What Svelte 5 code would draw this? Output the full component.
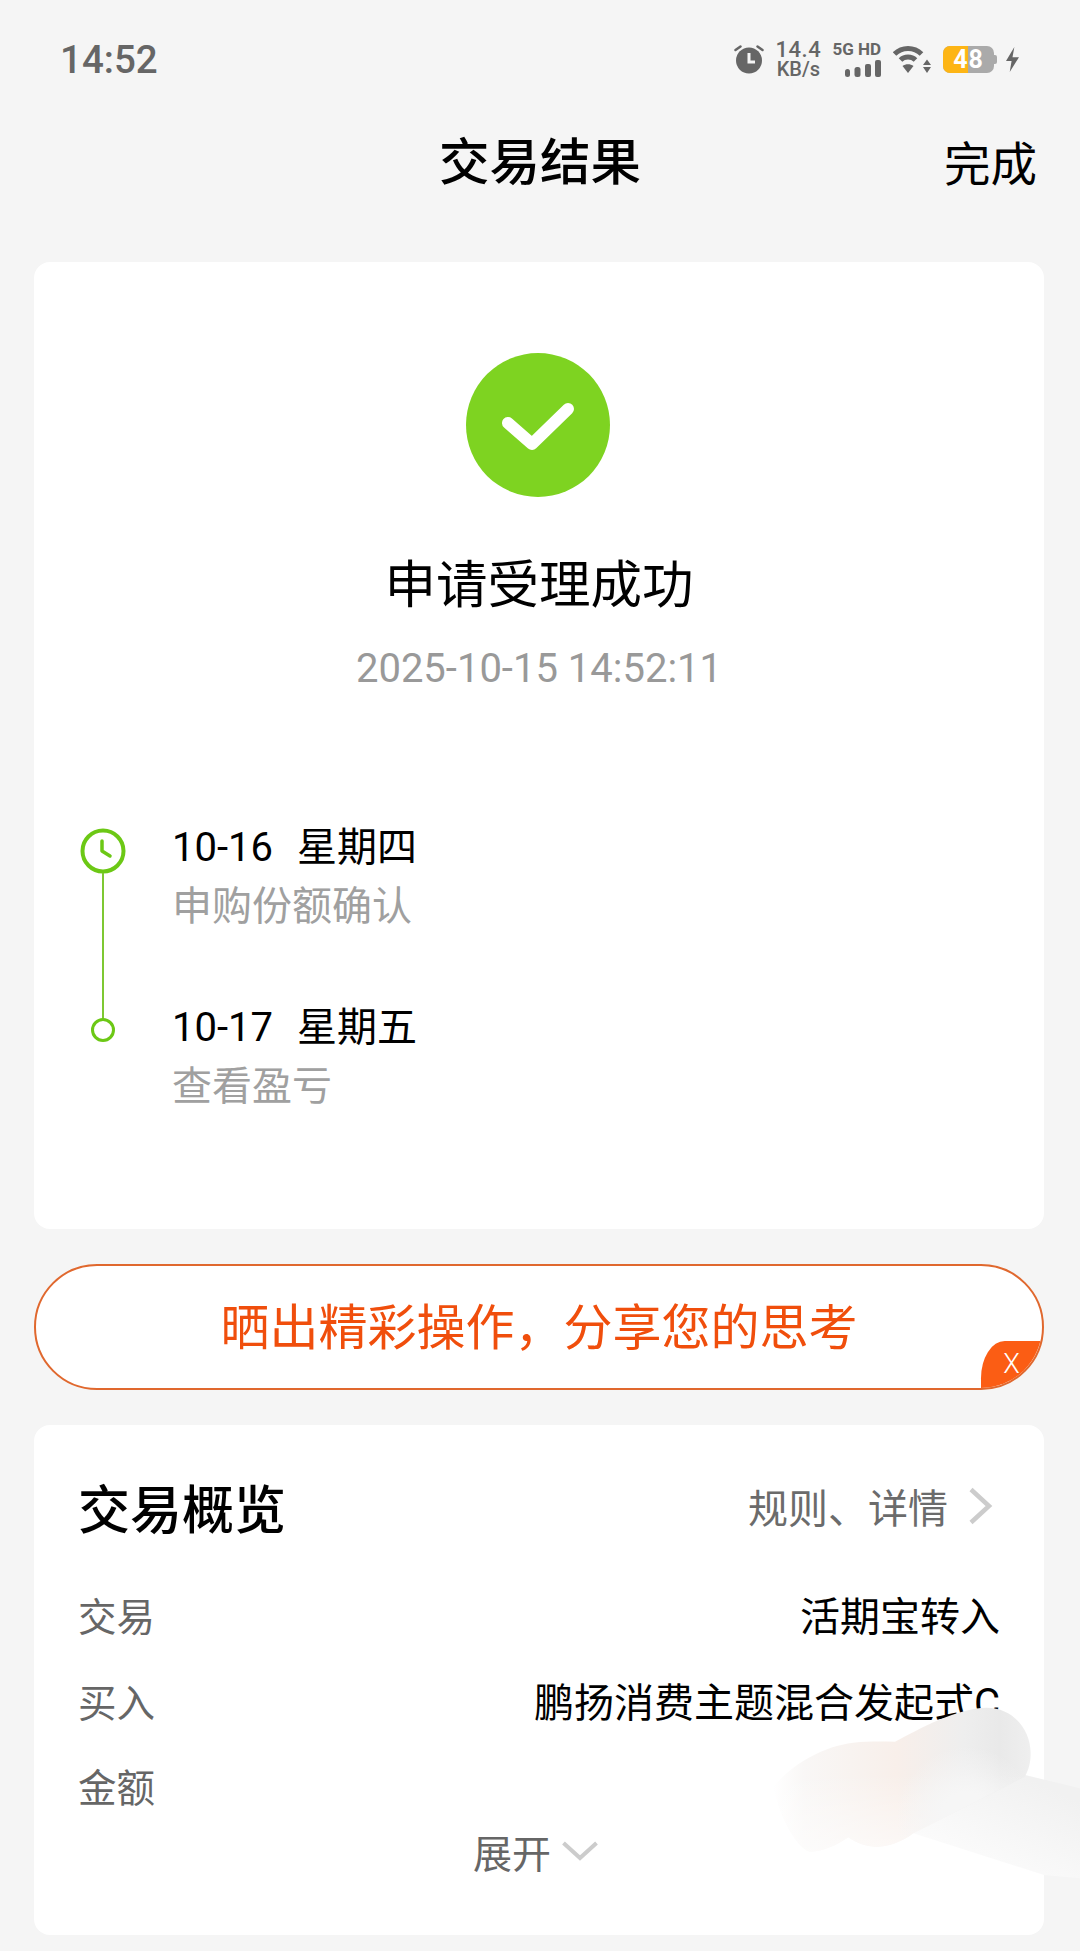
<script>
  const steps = [
    { date: '10-16', day: '星期四', note: '申购份额确认' },
    { date: '10-17', day: '星期五', note: '查看盈亏' }
  ];
  const rows = [
    { label: '交易', value: '活期宝转入' },
    { label: '买入', value: '鹏扬消费主题混合发起式C' },
    { label: '金额', value: '' }
  ];
  const lobe = 'M280 560C330 500 420 440 520 428C570 423 610 425 645 425C720 385 830 325 920 323C1000 323 1052 390 1052 460C1052 490 1045 510 1035 530L700 700C660 730 620 740 590 740C560 740 530 730 505 712C470 735 430 755 390 755C340 740 290 620 280 560Z';
</script>

<div class="page">
  <div class="status">
    <span class="time">14:52</span>
    <div class="status-icons">
      <svg width="30" height="30" viewBox="0 0 30 30">
        <circle cx="15" cy="16.5" r="13" fill="#666" />
        <path d="M1.5 6l5-3.5M28.5 6l-5-3.5" stroke="#666" stroke-width="2.5" stroke-linecap="round" />
        <path d="M15 9v9h6" fill="none" stroke="#f5f5f5" stroke-width="3" />
      </svg>
      <div class="speed"><span class="rate">14.4</span><span class="unit">KB/s</span></div>
      <div class="net">
        <span>5G HD</span>
        <svg width="36" height="17" viewBox="0 0 36 17">
          <rect x="0" y="9" width="5" height="8" rx="2.5" fill="#666" />
          <rect x="9.5" y="7" width="6" height="10" rx="2.5" fill="#666" />
          <rect x="20" y="4" width="6" height="13" rx="2" fill="#666" />
          <rect x="30" y="0" width="6" height="17" rx="2" fill="#666" />
        </svg>
      </div>
      <svg width="38" height="30" viewBox="0 0 38 30">
        <path d="M1.5 10C9 2.5 21 2.5 28.5 10" fill="none" stroke="#666" stroke-width="5" />
        <path d="M7.5 16C11.5 12 18.5 12 22.5 16" fill="none" stroke="#666" stroke-width="5" />
        <path d="M15 29L9.5 22C12.5 19.5 17.5 19.5 20.5 22Z" fill="#666" />
        <path d="M34 15.5l4 5.5h-8zM34 29l4-6h-8z" fill="#666" />
      </svg>
      <div class="battery"><span class="level"></span><b>48</b><i></i></div>
      <svg width="13" height="27" viewBox="0 0 14 27"><path d="M9 0L0 15h6l-2 12 10-16H7z" fill="#666" /></svg>
    </div>
  </div>

  <header class="nav">
    <h1>交易结果</h1>
    <span class="done">完成</span>
  </header>

  <section class="card result">
    <svg class="ok" width="144" height="144" viewBox="0 0 144 144">
      <circle cx="72" cy="72" r="72" fill="#7ed321" />
      <path d="M42 70l24 21 36-35" fill="none" stroke="#fff" stroke-width="12" stroke-linecap="round" stroke-linejoin="round" />
    </svg>
    <h2>申请受理成功</h2>
    <p class="stamp">2025-10-15 14:52:11</p>

    <div class="timeline">
      {#each steps as step, i}
        <div class="step">
          <div class="marker">
            {#if i === 0}
              <svg width="46" height="46" viewBox="0 0 46 46">
                <circle cx="23" cy="23" r="20.5" fill="none" stroke="#6cc815" stroke-width="4" />
                <path d="M22 13v10l8 5" fill="none" stroke="#6cc815" stroke-width="3.5" stroke-linecap="round" stroke-linejoin="round" />
              </svg>
              <span class="line"></span>
            {:else}
              <span class="dot"></span>
            {/if}
          </div>
          <div class="step-text">
            <div class="when"><span>{step.date}</span><span>{step.day}</span></div>
            <div class="note">{step.note}</div>
          </div>
        </div>
      {/each}
    </div>
  </section>

  <div class="share">
    <span>晒出精彩操作，分享您的思考</span>
    <span class="close">X</span>
  </div>

  <section class="card overview">
    <div class="overview-head">
      <h3>交易概览</h3>
      <div class="more">
        <span>规则、详情</span>
        <svg width="26" height="38" viewBox="0 0 26 38"><path d="M4 2.5l18 16.5L4 35.5" fill="none" stroke="#ccc" stroke-width="4.5" /></svg>
      </div>
    </div>
    {#each rows as row}
      <div class="row"><span class="label">{row.label}</span><span class="value">{row.value}</span></div>
    {/each}
    <div class="expand">
      <span>展开</span>
      <svg width="38" height="22" viewBox="0 0 38 22"><path d="M2.5 3L19 18L35.5 3" fill="none" stroke="#ccc" stroke-width="4" /></svg>
    </div>
  </section>

  <!-- smudge painted over the screenshot, coordinates are zoomed 3x -->
  <svg class="smudge" width="400" height="351" viewBox="0 0 1200 1053">
    <defs>
      <linearGradient id="lobe" gradientUnits="userSpaceOnUse" x1="280" y1="0" x2="1052" y2="0">
        <stop offset="0" stop-color="#fff" />
        <stop offset="0.12" stop-color="#f9f7f6" />
        <stop offset="0.3" stop-color="#f8f3f0" />
        <stop offset="0.48" stop-color="#f8efea" />
        <stop offset="0.74" stop-color="#eeeeee" />
        <stop offset="0.88" stop-color="#e9e9e9" />
        <stop offset="1" stop-color="#efefef" />
      </linearGradient>
      <linearGradient id="fade" gradientUnits="userSpaceOnUse" x1="0" y1="520" x2="0" y2="755">
        <stop offset="0" stop-color="#fff" stop-opacity="0" />
        <stop offset="1" stop-color="#fff" stop-opacity="0.6" />
      </linearGradient>
      <radialGradient id="blend" gradientUnits="userSpaceOnUse" cx="860" cy="650" r="210">
        <stop offset="0.35" stop-color="#f6f6f6" />
        <stop offset="1" stop-color="#f6f6f6" stop-opacity="0" />
      </radialGradient>
      <linearGradient id="tail" gradientUnits="userSpaceOnUse" x1="1060" y1="540" x2="930" y2="810">
        <stop offset="0" stop-color="#f1f1f1" />
        <stop offset="1" stop-color="#fbfbfb" />
      </linearGradient>
    </defs>
    <path d="M1035 525L1200 565V835L1092 825L700 700z" fill="url(#tail)" />
    <path d={lobe} fill="url(#lobe)" />
    <path d={lobe} fill="url(#fade)" />
    <path d={lobe} fill="url(#blend)" />
  </svg>
</div>

<style>
  :global(body) {
    margin: 0;
    background: #f5f5f5;
  }

  .page {
    position: relative;
    width: 1080px;
    height: 1951px;
    overflow: hidden;
    background: #f5f5f5;
    font-family: Roboto, "Noto Sans CJK SC", sans-serif;
    color: #000;
  }

  .status {
    height: 120px;
    padding: 0 61px 2px 60px;
    box-sizing: border-box;
    display: flex;
    align-items: center;
    justify-content: space-between;
  }

  .time {
    font-size: 38.5px;
    font-weight: 500;
    color: #666;
  }

  .status-icons {
    display: flex;
    align-items: center;
    gap: 12px;
    color: #666;
  }

  .speed {
    display: flex;
    flex-direction: column;
    align-items: center;
    width: 44px;
    font-weight: 500;
  }

  .rate {
    font-size: 22px;
    line-height: 20px;
    letter-spacing: 0.5px;
  }

  .unit {
    font-size: 20px;
    line-height: 18px;
  }

  .net {
    display: flex;
    flex-direction: column;
    align-items: flex-end;
    gap: 3px;
    font-size: 17px;
    line-height: 15px;
    font-weight: 700;
  }

  .battery {
    position: relative;
    width: 51px;
    height: 27px;
    border-radius: 7px;
    background: #aaa;
    display: flex;
    align-items: center;
    justify-content: center;
  }

  .battery b {
    position: relative;
    font-size: 25px;
    letter-spacing: 1px;
    color: #fff;
    font-weight: 700;
  }

  .level {
    position: absolute;
    left: 0;
    top: 0;
    bottom: 0;
    width: 25px;
    background: #fdb515;
    border-radius: 7px 0 0 7px;
  }

  .battery i {
    position: absolute;
    right: -3px;
    top: 9px;
    width: 3px;
    height: 9px;
    background: #aaa;
    border-radius: 0 2px 2px 0;
  }

  .nav {
    position: relative;
    height: 84px;
    display: flex;
    align-items: center;
    justify-content: center;
    padding-bottom: 8px;
    box-sizing: border-box;
  }

  h1 {
    margin: 0;
    font-size: 50.5px;
    font-weight: 500;
  }

  .done {
    position: absolute;
    right: 43px;
    top: 15px;
    font-size: 46.5px;
    line-height: 60px;
  }

  .card {
    margin: 0 36px 0 34px;
    background: #fff;
    border-radius: 16px;
  }

  .result {
    margin-top: 58px;
    height: 967px;
    box-sizing: border-box;
    padding-top: 91px;
    display: flex;
    flex-direction: column;
    align-items: center;
  }

  .ok {
    display: block;
    margin-right: 2px;
  }

  h2 {
    margin: 55px 0 0;
    font-size: 51.5px;
    line-height: 68px;
    font-weight: 400;
  }

  .stamp {
    margin: 21px 0 0;
    font-size: 40px;
    line-height: 56px;
    color: #999;
  }

  .timeline {
    align-self: stretch;
    margin-top: 123px;
    padding-left: 46px;
  }

  .step {
    display: flex;
    height: 180px;
  }

  .marker {
    position: relative;
    width: 46px;
    margin-right: 46px;
    display: flex;
    flex-direction: column;
    align-items: center;
    padding-top: 8px;
  }

  .marker svg {
    display: block;
    flex: none;
  }

  .line {
    flex: none;
    width: 2.5px;
    height: 146px;
    background: #7ec832;
    margin-top: -1px;
  }

  .dot {
    flex: none;
    width: 24px;
    height: 24px;
    box-sizing: border-box;
    border: 3px solid #6cc815;
    border-radius: 50%;
    margin-top: 10px;
    background: #fff;
  }

  .when {
    display: flex;
    gap: 24px;
    font-size: 40px;
    line-height: 56px;
  }

  .note {
    margin-top: 3px;
    font-size: 40px;
    line-height: 56px;
    color: #a0a0a0;
  }

  .share {
    position: relative;
    margin: 35px 36px 0 34px;
    height: 126px;
    padding-bottom: 8px;
    box-sizing: border-box;
    border: 2px solid #e0682e;
    border-radius: 63px;
    background: #fff;
    overflow: hidden;
    display: flex;
    align-items: center;
    justify-content: center;
    color: #f04e0c;
    font-size: 49px;
  }

  .close {
    position: absolute;
    right: 0;
    bottom: 0;
    width: 61px;
    height: 47px;
    background: #fb5d14;
    border-radius: 30px 47px 0 0 / 47px 0 0 0;
    color: #fff;
    font-size: 27px;
    font-weight: 300;
    line-height: 47px;
    text-align: center;
  }

  .overview {
    margin-top: 35px;
    height: 510px;
    box-sizing: border-box;
    padding: 50px 44px 0 44px;
  }

  .overview-head {
    display: flex;
    align-items: center;
    justify-content: space-between;
    height: 62px;
    margin-bottom: 53px;
  }

  h3 {
    margin: 0;
    font-size: 52px;
    font-weight: 500;
  }

  .more {
    display: flex;
    align-items: center;
    gap: 19px;
    margin-right: 7px;
    font-size: 40px;
    color: #6b6b6b;
  }

  .row {
    display: flex;
    justify-content: space-between;
    height: 85.5px;
    font-size: 40px;
    line-height: 56px;
  }

  .label {
    font-size: 38.5px;
    color: #666;
  }

  .expand {
    display: flex;
    align-items: center;
    justify-content: center;
    gap: 10px;
    margin-top: -24px;
    margin-right: 6px;
    font-size: 39px;
    color: #666;
  }

  .smudge {
    position: absolute;
    left: 680px;
    top: 1600px;
  }
</style>
